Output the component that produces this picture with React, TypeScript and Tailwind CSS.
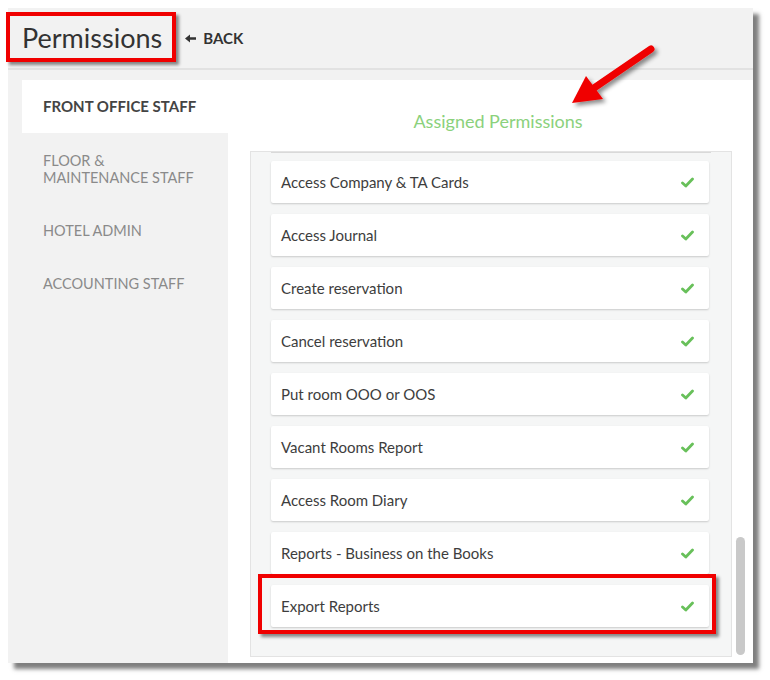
const roles = [
  { label: "FRONT OFFICE STAFF", active: true },
  { label: "FLOOR & MAINTENANCE STAFF", active: false },
  { label: "HOTEL ADMIN", active: false },
  { label: "ACCOUNTING STAFF", active: false },
];

const permissions = [
  "Access Company & TA Cards",
  "Access Journal",
  "Create reservation",
  "Cancel reservation",
  "Put room OOO or OOS",
  "Vacant Rooms Report",
  "Access Room Diary",
  "Reports - Business on the Books",
  "Export Reports",
];

function Check() {
  return (
    <svg width="13" height="11" viewBox="0 0 13 11" className="shrink-0">
      <path d="M1.5 6 L4.8 9 L11.5 2" fill="none" stroke="#68c05a" strokeWidth="2.8" strokeLinecap="round" strokeLinejoin="round" />
    </svg>
  );
}

function PermissionRow({ name, highlight }: { name: string; highlight?: boolean }) {
  return (
    <div className="relative">
      <div className="flex h-[42px] items-center justify-between rounded-[2px] bg-white pl-[10px] pr-[15px] text-[15px] text-[#3d3d3d] shadow-[0_1px_2px_rgba(0,0,0,0.18)]">
        <span>{name}</span>
        <Check />
      </div>
      {highlight && (
        <div className="absolute -top-[11px] -bottom-[7px] -left-[13px] -right-[7px] border-[4px] border-[#f00000] shadow-[3px_3px_3px_rgba(0,0,0,0.45)]" />
      )}
    </div>
  );
}

export default function App() {
  return (
    <div className="relative h-[680px] w-[770px] bg-white pl-[8px] pt-[8px] font-['Lato',sans-serif]">
      <div className="flex h-[655px] w-[745px] flex-col bg-[#f2f2f2] shadow-[6px_6px_4px_rgba(0,0,0,0.5)]">
        {/* Header */}
        <div className="flex h-[62px] shrink-0 items-center border-b-2 border-[#e2e2e2]">
          <div className="relative ml-[14px] text-[27px] text-[#333]">
            Permissions
            <div className="absolute -top-[6px] -bottom-[4px] -left-[16px] -right-[14px] border-[4px] border-[#f00000] shadow-[3px_3px_3px_rgba(0,0,0,0.45)]" />
          </div>
          <div className="ml-[23px] flex items-center gap-[7px] text-[15px] font-bold text-[#333]">
            <svg width="11" height="9" viewBox="0 0 11 9">
              <path d="M0 4.5 L5 0.5 L5 3.2 L11 3.2 L11 5.8 L5 5.8 L5 8.5 Z" fill="#333" />
            </svg>
            <span>BACK</span>
          </div>
        </div>

        {/* Body */}
        <div className="mt-[10px] flex flex-1 pl-[14px]">
          <div className="w-[206px] shrink-0">
            {roles.map((r) => (
              <div
                key={r.label}
                className={
                  r.active
                    ? "bg-white px-[21px] py-[18px] text-[15px] font-bold leading-[17px] text-[#444]"
                    : "px-[21px] pt-[19px] pb-[17px] text-[14.5px] leading-[17px] text-[#8a8a8a]"
                }
              >
                {r.label === "FLOOR & MAINTENANCE STAFF" ? (
                  <>
                    FLOOR &amp;
                    <br />
                    MAINTENANCE STAFF
                  </>
                ) : (
                  r.label
                )}
              </div>
            ))}
          </div>

          <div className="flex flex-1 flex-col bg-white pl-[22px] pr-[21px]">
            <div className="pt-[28px] pb-[16px] pl-[14px] text-center text-[18px] text-[#8bd17c]">
              Assigned Permissions
            </div>
            <div className="relative mb-[6px] flex-1">
              <div className="absolute inset-0 overflow-hidden border border-[#e3e3e3] bg-[#f5f6f6]">
                <div className="mx-[20px] h-px bg-[#d9d9d9]" />
                <div className="flex flex-col gap-[11px] pl-[20px] pr-[22px] pt-[8px]">
                  {permissions.map((p) => (
                    <PermissionRow key={p} name={p} highlight={p === "Export Reports"} />
                  ))}
                </div>
              </div>
              <div className="absolute -right-[13px] top-[386px] h-[118px] w-[9px] rounded-full bg-[#c9c9c9]" />
            </div>
          </div>
        </div>
      </div>

      {/* Red annotation arrow */}
      <svg className="pointer-events-none absolute left-0 top-0" width="770" height="680">
        <defs>
          <filter id="sh" x="-20%" y="-20%" width="140%" height="140%">
            <feDropShadow dx="3" dy="3" stdDeviation="2" floodColor="#000" floodOpacity="0.45" />
          </filter>
        </defs>
        <g filter="url(#sh)">
          <line x1="651" y1="49" x2="594" y2="88" stroke="#f00000" strokeWidth="7" strokeLinecap="round" />
          <polygon points="572,103 586,76 603,99" fill="#f00000" />
        </g>
      </svg>
    </div>
  );
}
